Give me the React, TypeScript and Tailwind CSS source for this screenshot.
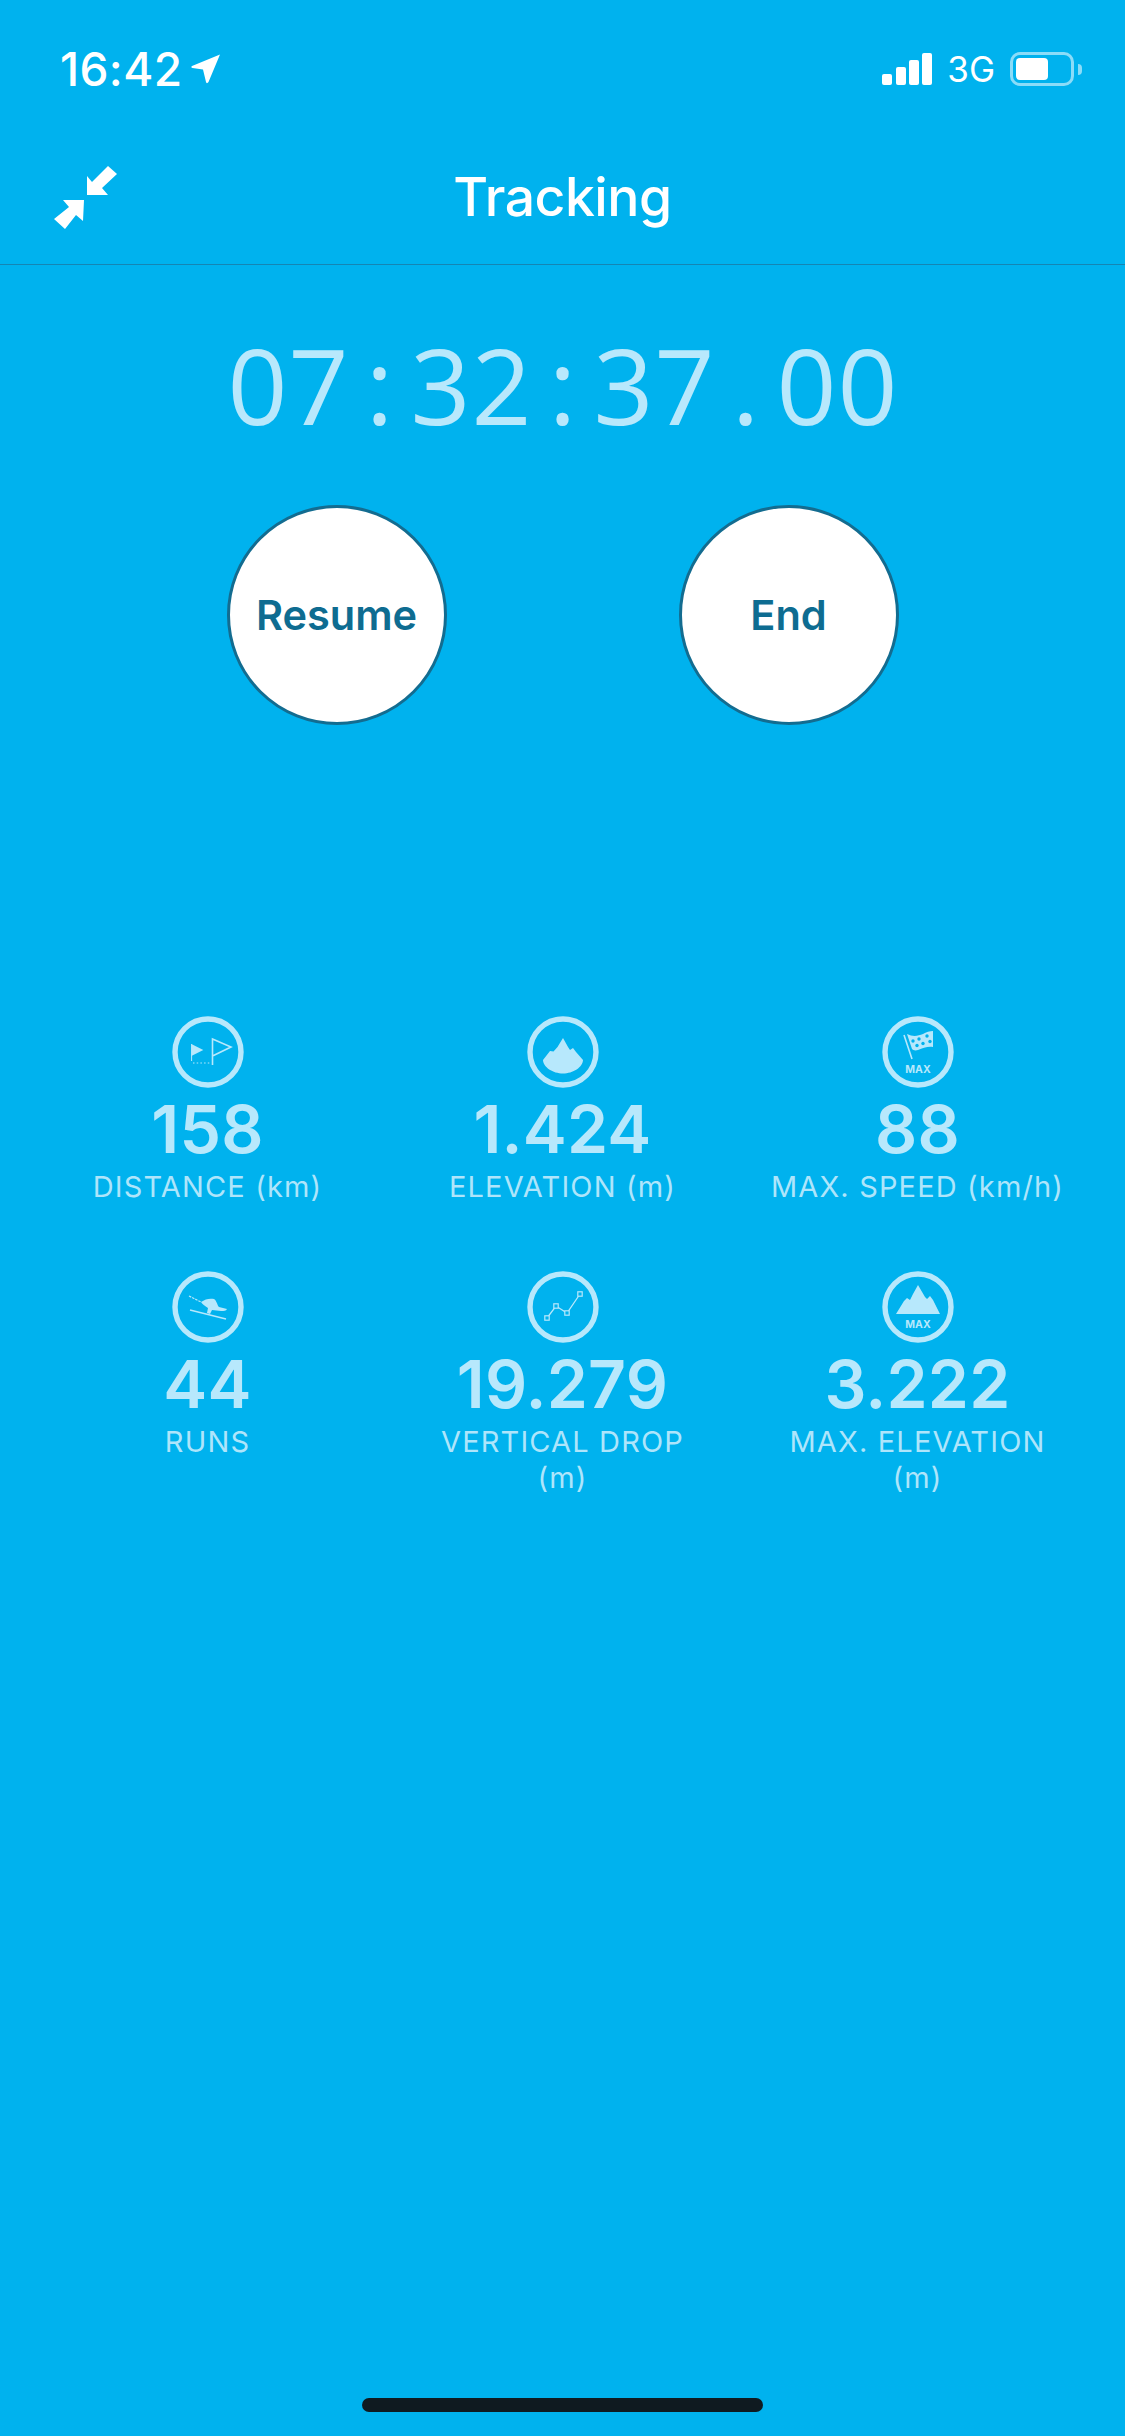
const BG = "#00b2ee";
const ICON = "#b7e8fc";

function IconRing({ children }: { children: React.ReactNode }) {
  return (
    <svg className="shrink-0" width="72" height="72" viewBox="-36 -36 72 72" fill="none">
      <circle cx="0" cy="0" r="33" stroke={ICON} strokeWidth="5.4" />
      {children}
    </svg>
  );
}

function DistanceIcon() {
  return (
    <IconRing>
      <path d="M-16.7 -8 L-4.7 -2 L-16.7 4 Z" fill={ICON} />
      <path d="M-16.4 -8 V9" stroke={ICON} strokeWidth="1" />
      <path d="M-15 11 H3" stroke={ICON} strokeWidth="1.2" strokeDasharray="1.5 2.2" />
      <path d="M4.5 13 V-13 L23 -5 L4.5 4" stroke={ICON} strokeWidth="1.6" />
    </IconRing>
  );
}

function ElevationIcon() {
  return (
    <IconRing>
      <path
        d="M0 -14 L5 -5 L7 -2 L10 -4 L13 0 L20 8 C20 15 10 21.5 0 21.5 C-10 21.5 -20 15 -20 8 L-13 -1 L-9.5 -0.5 L-5.5 -5 Z"
        fill={ICON}
      />
    </IconRing>
  );
}

function SpeedIcon() {
  return (
    <IconRing>
      <path d="M-14 -17 L-6 7" stroke={ICON} strokeWidth="1.6" />
      <path
        d="M-11 -18 C-5 -15 0 -16 5 -18 C8 -20 12 -21 15 -21 L15 -5 C10 -6 5 -4 0 -2 C-3 -1 -5 -2 -6 -3 Z"
        fill={ICON}
      />
      <g fill={BG}>
        <circle cx="-5" cy="-11" r="1.7" />
        <circle cx="1" cy="-13" r="1.7" />
        <circle cx="9" cy="-16" r="1.7" />
        <circle cx="-1" cy="-6.5" r="1.7" />
        <circle cx="5" cy="-8.5" r="1.7" />
        <circle cx="12" cy="-10.5" r="1.7" />
      </g>
      <text x="0" y="21" textAnchor="middle" fill={ICON} fontSize="10.5" fontWeight="700" fontFamily="Inter, sans-serif">
        MAX
      </text>
    </IconRing>
  );
}

function RunsIcon() {
  return (
    <IconRing>
      <path d="M-18 3 L18 12" stroke={ICON} strokeWidth="1.3" />
      <path d="M-19 -11 L-7 -5" stroke={ICON} strokeWidth="1.2" strokeDasharray="2.5 1" />
      <path
        d="M-7 -5 C-3 -8 2 -9 6 -8 C9 -6 9 -2 11 0 L19 2 C18 4 16 4 13 4 L4 3 L2 7 L-1 6 L0 1 C-3 -1 -6 -3 -7 -5 Z"
        fill={ICON}
      />
    </IconRing>
  );
}

function DropIcon() {
  return (
    <IconRing>
      <path d="M-16 11 L-7 -1 L4 6 L17 -13" stroke={ICON} strokeWidth="1.3" />
      <g stroke={ICON} strokeWidth="1.2" fill={BG}>
        <rect x="-18.2" y="8.8" width="4.4" height="4.4" />
        <rect x="-9.2" y="-3.2" width="4.4" height="4.4" />
        <rect x="1.8" y="3.8" width="4.4" height="4.4" />
        <rect x="14.8" y="-15.2" width="4.4" height="4.4" />
      </g>
    </IconRing>
  );
}

function MaxElevationIcon() {
  return (
    <IconRing>
      <path
        d="M0 -22 L7 -10 L9 -8 L12 -11 L15 -7 L22 7 H-22 L-14 -6 L-11 -9 L-8 -7 L-5 -13 Z"
        fill={ICON}
      />
      <text x="0" y="21" textAnchor="middle" fill={ICON} fontSize="10.5" fontWeight="700" fontFamily="Inter, sans-serif">
        MAX
      </text>
    </IconRing>
  );
}

const stats = [
  { value: "158", label: "DISTANCE (km)", icon: <DistanceIcon /> },
  { value: "1.424", label: "ELEVATION (m)", icon: <ElevationIcon /> },
  { value: "88", label: "MAX. SPEED (km/h)", icon: <SpeedIcon /> },
  { value: "44", label: "RUNS", icon: <RunsIcon /> },
  { value: "19.279", label: "VERTICAL DROP\n(m)", icon: <DropIcon /> },
  { value: "3.222", label: "MAX. ELEVATION\n(m)", icon: <MaxElevationIcon /> },
];

function StatusBar() {
  return (
    <div className="h-[138px] flex items-center justify-between pl-[60px] pr-[43px] text-white">
      <div className="flex items-center gap-[8px]">
        <span className="text-[46px] leading-none font-medium tracking-[0.4px]">16:42</span>
        <svg width="30" height="30" viewBox="0 0 30 30" fill="white">
          <path d="M29 0.5 L1 12 C0 12.5 0.3 14 1.5 14 L12 15.5 L15 28 C15.2 29.5 16.6 29.5 17.5 28 Z" />
        </svg>
      </div>
      <div className="flex items-center">
        <div className="flex items-end gap-[3.3px] h-[32px]">
          <div className="w-[10px] h-[11px] rounded-[2px] bg-white" />
          <div className="w-[10px] h-[18px] rounded-[2px] bg-white" />
          <div className="w-[10px] h-[25px] rounded-[2px] bg-white" />
          <div className="w-[10px] h-[32px] rounded-[2px] bg-white" />
        </div>
        <span className="ml-[15px] text-[35px] leading-none">3G</span>
        <div className="ml-[15px] flex items-center">
          <div className="w-[64px] h-[34px] rounded-[10px] border-[3px] border-[#8bdcf8] p-[3px]">
            <div className="w-[32px] h-full rounded-[4px] bg-white" />
          </div>
          <div className="ml-[4px] w-[4px] h-[11px] rounded-r-full bg-[#8bdcf8]" />
        </div>
      </div>
    </div>
  );
}

function Header() {
  return (
    <div className="h-[127px] px-[54px] pb-[8px] grid grid-cols-[1fr_auto_1fr] items-center border-b-[1.5px] border-[#1585b3] text-white">
      <svg width="63" height="63" viewBox="0 0 63 63" fill="white">
        <path d="M33 29 H54 L48 22 L63 8 L54 0 L38 16 L33 10 Z" />
        <path d="M30 34 H9 L15 41 L0 53 L11 63 L22 49 L29 55 Z" />
      </svg>
      <h1 className="text-[53.5px] leading-none font-medium tracking-[-0.5px]">Tracking</h1>
      <div />
    </div>
  );
}

function RoundButton({ label }: { label: string }) {
  return (
    <button className="w-[220px] h-[220px] rounded-full bg-white border-[3px] border-[#136c90] flex items-center justify-center text-[41.5px] font-semibold text-[#0e6c91]">
      {label}
    </button>
  );
}

export default function App() {
  return (
    <div
      className="relative w-[1125px] h-[2436px] overflow-hidden bg-[#00b2ee]"
      style={{ fontFamily: "Inter, sans-serif" }}
    >
      <StatusBar />
      <Header />

      <div
        className="mt-[60px] flex justify-center text-[105px] leading-[120px] text-[#b8e8fc]"
        style={{ fontFamily: "'Open Sans', sans-serif" }}
      >
        {"07:32:37.00".split("").map((ch, i) => (
          <span key={i} className="w-[61px] text-center">
            {ch}
          </span>
        ))}
      </div>

      <div className="mt-[60px] flex justify-center gap-[232px]">
        <RoundButton label="Resume" />
        <RoundButton label="End" />
      </div>

      <div className="mt-[291px] px-[30px] grid grid-cols-[repeat(3,355px)] gap-y-[66px]">
        {stats.map((stat) => (
          <div key={stat.label} className="flex flex-col items-center text-[#b7e8fc]">
            {stat.icon}
            <div className="mt-[3px] text-[66px] leading-[76px] font-semibold tracking-[0.2px]">{stat.value}</div>
            <div className="mt-[2px] text-center text-[29px] leading-[36px] tracking-[1.15px] whitespace-pre-line text-[#aee5fb]">
              {stat.label}
            </div>
          </div>
        ))}
      </div>

      <div className="absolute left-[362px] bottom-[24px] w-[401px] h-[14px] rounded-full bg-[#0f1a20]" />
    </div>
  );
}
